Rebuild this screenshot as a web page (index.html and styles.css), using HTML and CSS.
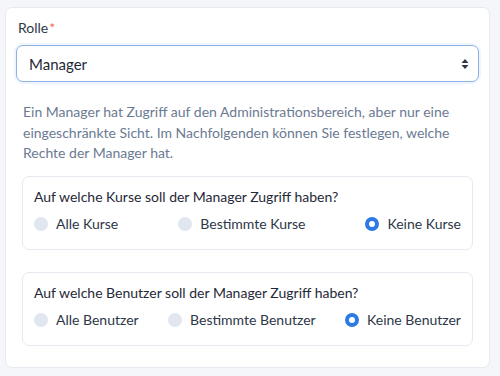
FILE: index.html
```
<!DOCTYPE html>
<html lang="de">
<head>
  <meta charset="UTF-8">
  <meta name="viewport" content="width=device-width, initial-scale=1.0">
  <title>Rolle</title>
  <link rel="stylesheet" href="styles.css">
</head>
<body>
  <div class="card">
    <label class="field-label" for="role">Rolle<span class="required">*</span></label>
    <div class="select-wrap">
      <select id="role" name="role">
        <option>Manager</option>
        <option>Administrator</option>
        <option>Benutzer</option>
      </select>
      <svg class="select-caret" width="8" height="12" viewBox="0 0 8 12">
        <path d="M4 1 L7.5 5 H0.5 Z M4 11 L0.5 7 H7.5 Z" fill="#2d3748"/>
      </svg>
    </div>
    <p class="hint">Ein Manager hat Zugriff auf den Administrationsbereich, aber nur eine eingeschränkte Sicht. Im Nachfolgenden können Sie festlegen, welche Rechte der Manager hat.</p>

    <fieldset class="group">
      <legend class="group-title">Auf welche Kurse soll der Manager Zugriff haben?</legend>
      <div class="options">
        <label class="option"><input type="radio" name="courses" value="all"> Alle Kurse</label>
        <label class="option"><input type="radio" name="courses" value="some"> Bestimmte Kurse</label>
        <label class="option"><input type="radio" name="courses" value="none" checked> Keine Kurse</label>
      </div>
    </fieldset>

    <fieldset class="group">
      <legend class="group-title">Auf welche Benutzer soll der Manager Zugriff haben?</legend>
      <div class="options">
        <label class="option"><input type="radio" name="users" value="all"> Alle Benutzer</label>
        <label class="option"><input type="radio" name="users" value="some"> Bestimmte Benutzer</label>
        <label class="option"><input type="radio" name="users" value="none" checked> Keine Benutzer</label>
      </div>
    </fieldset>
  </div>
</body>
</html>
```

FILE: styles.css
```
* {
  box-sizing: border-box;
  font-family: 'Lato', 'Open Sans', sans-serif;
}

body {
  margin: 0;
  background-color: #f4f6fa;
  color: #1f2937;
}

.card {
  width: 485px;
  margin: 7px 0 8px 5px;
  padding: 10px 10px 21px;
  background: #ffffff;
  border: 1px solid #e6e9ef;
  border-radius: 7px;
}

.field-label {
  display: block;
  margin-left: 2px;
  margin-bottom: 7px;
  font-size: 14px;
  line-height: 20px;
  color: #2d3748;
}

.required {
  color: #ef6a4c;
  margin-left: 1px;
}

.select-wrap {
  position: relative;
}

select {
  display: block;
  width: 100%;
  height: 37px;
  padding: 0 12px;
  border: 1px solid #8cb2e8;
  border-radius: 7px;
  box-shadow: 0 0 0 2px rgba(44, 123, 229, 0.08);
  background: #ffffff;
  font-size: 15px;
  color: #1f2937;
  appearance: none;
  -webkit-appearance: none;
  outline: none;
}

.select-caret {
  position: absolute;
  right: 10px;
  top: 13px;
  pointer-events: none;
}

.hint {
  margin: 20px 7px 12px;
  font-size: 14px;
  line-height: 20.5px;
  color: #6b7a93;
}

.group {
  margin: 0 6px 22px;
  padding: 10px 11px 15px;
  border: 1px solid #e6e9ef;
  border-radius: 7px;
}

.group:last-child {
  margin-bottom: 0;
}

.group-title {
  float: left;
  width: 100%;
  padding: 0;
  font-size: 14px;
  line-height: 20px;
  color: #1f2937;
}

.options {
  clear: both;
  display: flex;
  justify-content: space-between;
  padding-top: 7px;
}

.option {
  display: flex;
  align-items: center;
  gap: 8px;
  font-size: 14px;
  line-height: 20px;
  color: #2d3748;
}

input[type="radio"] {
  appearance: none;
  -webkit-appearance: none;
  width: 14px;
  height: 14px;
  margin: 0;
  border-radius: 50%;
  background: #e2e6ef;
}

input[type="radio"]:checked {
  background: #ffffff;
  border: 4.5px solid #2c7be5;
}
```
